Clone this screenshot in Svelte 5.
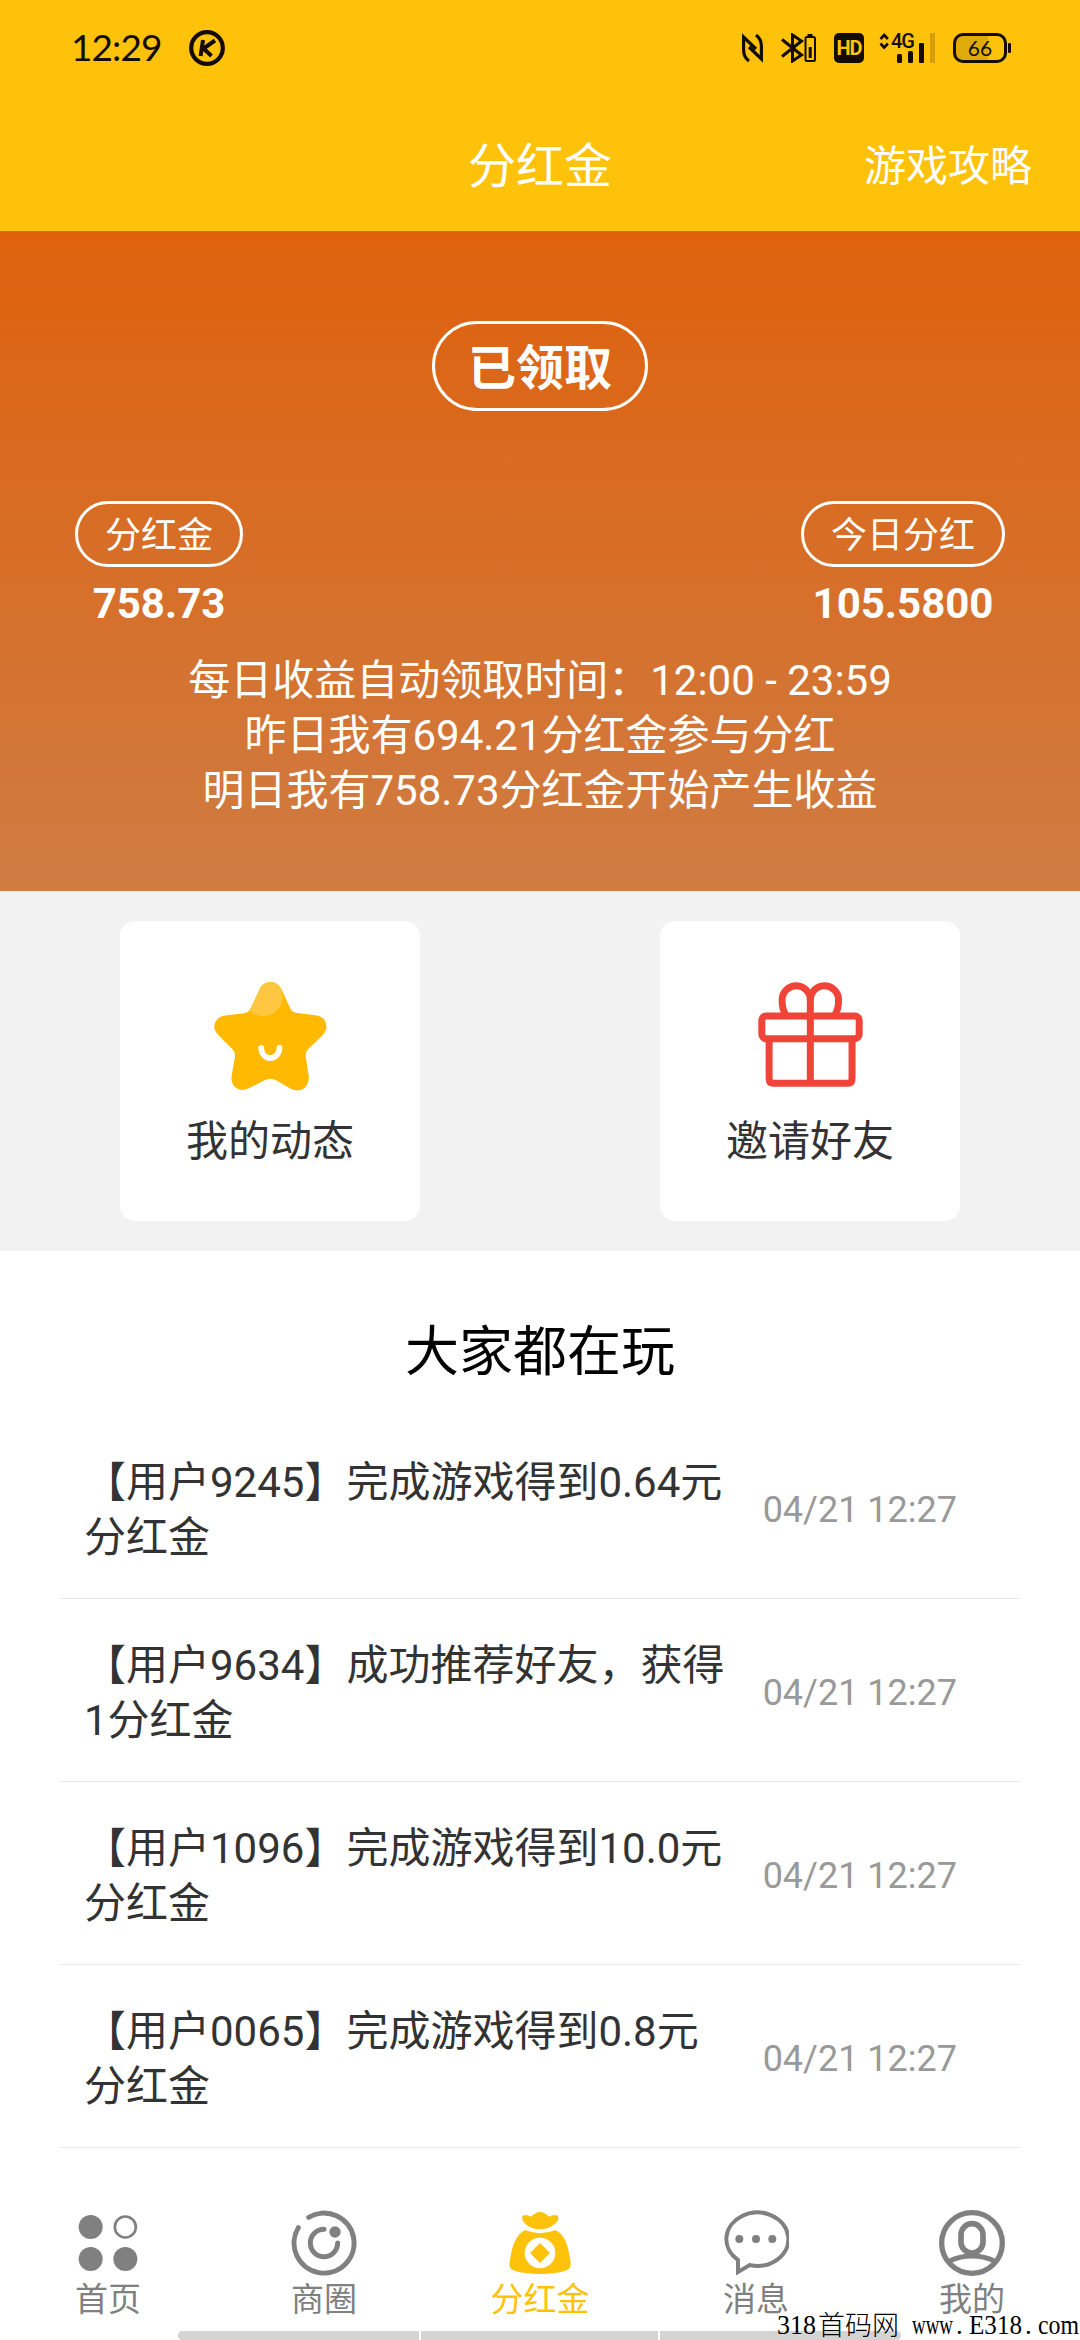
<script>
  const notices = [
    '每日收益自动领取时间：12:00 - 23:59',
    '昨日我有694.21分红金参与分红',
    '明日我有758.73分红金开始产生收益'
  ];

  const records = [
    { text: '【用户9245】完成游戏得到0.64元分红金', time: '04/21 12:27' },
    { text: '【用户9634】成功推荐好友，获得1分红金', time: '04/21 12:27' },
    { text: '【用户1096】完成游戏得到10.0元分红金', time: '04/21 12:27' },
    { text: '【用户0065】完成游戏得到0.8元分红金', time: '04/21 12:27' }
  ];

  const tabs = [
    { id: 'home', label: '首页' },
    { id: 'shop', label: '商圈' },
    { id: 'bonus', label: '分红金' },
    { id: 'message', label: '消息' },
    { id: 'mine', label: '我的' }
  ];

  let active = 'bonus';
</script>

<div class="page">
  <header>
    <div class="status">
      <span class="clock">12:29</span>
      <svg class="k-icon" width="36" height="36" viewBox="0 0 36 36" fill="none" stroke="#140c00">
        <circle cx="18" cy="18" r="15.8" stroke-width="4.2"/>
        <path d="M14 10l-2.4 16M26 10.5L14.5 18.5l8 7.5" stroke-width="4"/>
      </svg>

      <div class="status-right">
        <!-- nfc -->
        <svg width="21" height="30" viewBox="0 0 21 30" fill="none" stroke="#140c00" stroke-width="3.2">
          <path d="M7 28Q1.6 24 1.6 17V4L14 16M14 2Q19.4 6 19.4 13V26L7 14"/>
        </svg>
        <!-- bluetooth + device battery -->
        <svg class="bt" width="35" height="30" viewBox="0 0 35 30" fill="none" stroke="#140c00">
          <path d="M1 6.5L20.5 22L11.5 28V2L20.5 8L1 23.5" stroke-width="3"/>
          <rect x="24.5" y="4" width="9.5" height="24" rx="1.5" stroke-width="2"/>
          <path d="M26.5 2.5h5M29.2 14v11" stroke-width="3"/>
        </svg>
        <div class="hd">HD</div>
        <div class="signal">
          <svg width="56" height="30" viewBox="0 0 56 30">
            <path d="M1.5 6l3.7-4 3.7 4M1.5 10.5l3.7 4 3.7-4" fill="none" stroke="#140c00" stroke-width="2.6"/>
            <rect x="18" y="21" width="5" height="9" rx="1.5" fill="#140c00"/>
            <rect x="29" y="18" width="5" height="12" rx="1.5" fill="#140c00"/>
            <rect x="40" y="10" width="5" height="20" rx="1" fill="#140c00"/>
            <rect x="51" y="0" width="5" height="30" fill="#d39e08"/>
          </svg>
          <span>4G</span>
        </div>
        <div class="battery"><span>66</span></div>
      </div>
    </div>

    <div class="titlebar">
      <span></span>
      <h1>分红金</h1>
      <a href="#guide">游戏攻略</a>
    </div>
  </header>

  <section class="hero">
    <button class="claim">已领取</button>
    <div class="stats">
      <div class="stat">
        <span class="pill">分红金</span>
        <strong>758.73</strong>
      </div>
      <div class="stat">
        <span class="pill">今日分红</span>
        <strong>105.5800</strong>
      </div>
    </div>
    <div class="notices">
      {#each notices as line}
        <p>{line}</p>
      {/each}
    </div>
  </section>

  <section class="cards">
    <div class="card">
      <svg width="113" height="109" viewBox="0 0 340 328">
        <defs>
          <clipPath id="star">
            <path d="M138 20Q148 0 170 0Q192 0 203 22L229 78Q235 91 250 93L306 100Q330 103 337 124Q343 142 327 160L283 202Q274 211 276 224L285 282Q288 308 268 322Q252 331 232 322L187 296Q170 286 152 296L104 320Q84 331 66 318Q50 306 53 282L63 226Q65 211 54 201L12 158Q-4 142 3 124Q10 104 34 101L92 94Q104 92 110 80Z"/>
          </clipPath>
        </defs>
        <g clip-path="url(#star)">
          <rect width="340" height="328" fill="#ffb900"/>
          <circle cx="148" cy="45" r="58" fill="#ffc641"/>
        </g>
        <path d="M142 198a27.5 31 0 0 0 55 0" fill="none" stroke="#fff" stroke-width="17" stroke-linecap="round"/>
      </svg>
      <span>我的动态</span>
    </div>
    <div class="card">
      <svg width="105" height="109" viewBox="0 0 314 328" fill="none" stroke="#f04438" stroke-width="21">
        <rect x="10.5" y="102.5" width="293" height="68" rx="13"/>
        <path d="M32.500 171V292q0 13 13 13H269q13 0 13-13V171M156.500 50V305"/>
        <path d="M82 98Q71 80 71.500 53A42.500 42.500 0 0 1 156.500 55A42.500 42.500 0 0 1 241.500 53Q242 80 231 98"/>
      </svg>
      <span>邀请好友</span>
    </div>
  </section>

  <section class="feed">
    <h2>大家都在玩</h2>
    <ul>
      {#each records as item}
        <li>
          <p>{item.text}</p>
          <time>{item.time}</time>
        </li>
      {/each}
    </ul>
  </section>

  <nav>
    {#each tabs as tab}
      <button class="tab" class:active={active === tab.id} on:click={() => (active = tab.id)}>
        <svg width="66" height="66" viewBox="0 0 198 198" fill="none" stroke="currentColor">
          {#if tab.id === 'home'}
            <g fill="currentColor" stroke="none">
              <circle cx="47" cy="51" r="36"/>
              <circle cx="47" cy="147" r="36"/>
              <circle cx="151" cy="147" r="36"/>
            </g>
            <circle cx="151" cy="51" r="31.5" stroke-width="8"/>
          {:else if tab.id === 'shop'}
            <g stroke-width="15" stroke-linecap="round">
              <path d="M53 22A90 90 0 1 1 22 53"/>
              <path d="M99 58A41 41 0 1 0 140 99"/>
            </g>
            <circle cx="132" cy="66" r="17" fill="currentColor" stroke="none"/>
          {:else if tab.id === 'bonus'}
            <g transform="translate(7 6)" fill="currentColor" stroke="none">
              <path d="M40 11Q52 6 65 14Q92 -14 119 14Q132 6 145 11Q152 22 136 36Q118 52 92 52Q66 52 48 36Q34 22 40 11Z"/>
              <path fill-rule="evenodd" d="M48 54Q92 74 138 54Q172 70 180 130Q187 158 182 166Q174 184 92 186Q10 184 2 166Q-2 158 4 132Q14 70 48 54ZM92 77a46 46 0 1 0 0 92a46 46 0 1 0 0-92Z"/>
              <path d="M92 93l30 30l-30 30l-30-30z"/>
            </g>
          {:else if tab.id === 'message'}
            <path d="M45 150A93 80 0 1 1 80 165L45 186Z" stroke-width="12"/>
            <g fill="currentColor" stroke="none">
              <circle cx="49" cy="87" r="12"/>
              <circle cx="99" cy="87" r="12"/>
              <circle cx="148" cy="87" r="12"/>
            </g>
          {:else}
            <circle cx="99" cy="99" r="91" stroke-width="16"/>
            <rect x="66" y="41" width="66" height="88" rx="33" stroke-width="17"/>
            <path d="M27 155Q62 138 99 138T171 155" stroke-width="15"/>
          {/if}
        </svg>
        <span>{tab.label}</span>
      </button>
    {/each}

    <!-- system gesture bar -->
    <div class="gesture"><i></i><i></i><i></i></div>
    <svg class="watermark" width="304" height="34" viewBox="0 0 304 34">
      <text x="1" y="28" textLength="39" lengthAdjust="spacingAndGlyphs">318</text>
      <text class="cn" x="42" y="29">首码网</text>
      <text x="136" y="28" textLength="41" lengthAdjust="spacingAndGlyphs">www</text>
      <text x="180" y="28">.</text>
      <text x="193" y="28" textLength="53" lengthAdjust="spacingAndGlyphs">E318</text>
      <text x="249" y="28">.</text>
      <text x="262" y="28" textLength="41" lengthAdjust="spacingAndGlyphs">com</text>
    </svg>
  </nav>
</div>

<style>
  :global(body) {
    background: #fff;
  }

  .page {
    width: 1080px;
    height: 2340px;
    display: flex;
    flex-direction: column;
    overflow: hidden;
    font-family: Roboto, "Noto Sans CJK SC", sans-serif;
    font-size: 42px;
    line-height: 55px;
    color: #333;
  }

  h1, h2, p, ul {
    margin: 0;
    padding: 0;
    font-weight: 400;
  }

  button {
    font-family: inherit;
    background: none;
    border: none;
    padding: 0;
  }

  header {
    height: 231px;
    background: #ffc20a;
    flex: none;
  }

  .status {
    height: 96px;
    padding: 0 69px 0 71px;
    display: flex;
    align-items: center;
    color: #140c00;
  }

  .clock {
    width: 118px;
    padding-bottom: 3px;
    font-family: Lato, sans-serif;
    font-size: 37px;
    letter-spacing: -0.9px;
  }

  .status-right {
    margin-left: auto;
    display: flex;
    align-items: center;
    gap: 18px;
  }

  .hd {
    width: 30px;
    height: 30px;
    border-radius: 5px;
    background: #140c00;
    color: #ffc20a;
    font-size: 20px;
    font-weight: 700;
    line-height: 31px;
    letter-spacing: -1px;
    text-align: center;
  }

  .signal {
    position: relative;
    display: flex;
    margin-left: -3px;
  }

  .signal span {
    position: absolute;
    left: 12px;
    top: -2px;
    font-size: 20px;
    font-weight: 500;
    line-height: 20px;
    letter-spacing: -1px;
  }

  .battery {
    position: relative;
    box-sizing: border-box;
    width: 54px;
    height: 30px;
    margin-right: 4px;
    border: 3px solid #140c00;
    border-radius: 10px;
    background: linear-gradient(90deg, #dfab0b 66%, #ffc20a 66%);
    font-family: Lato, sans-serif;
    font-size: 21px;
    line-height: 23px;
    text-align: center;
  }

  .battery::after {
    content: '';
    position: absolute;
    right: -7px;
    top: 7px;
    width: 3px;
    height: 10px;
    border-radius: 1px;
    background: #140c00;
  }

  .titlebar {
    height: 135px;
    box-sizing: border-box;
    display: grid;
    grid-template-columns: 1fr auto 1fr;
    align-items: center;
    padding: 6px 48px 0;
    color: #fff;
  }

  h1 {
    font-size: 48px;
  }

  .titlebar a {
    justify-self: end;
    color: inherit;
    text-decoration: none;
  }

  .hero {
    box-sizing: border-box;
    height: 660px;
    flex: none;
    padding-top: 90px;
    display: flex;
    flex-direction: column;
    align-items: center;
    background: linear-gradient(#df610d, #cf7c43);
    color: #fff;
  }

  .claim {
    box-sizing: border-box;
    width: 216px;
    height: 90px;
    padding-bottom: 4px;
    border: 3px solid #fff;
    border-radius: 45px;
    color: #fff;
    font-size: 48px;
    font-weight: 700;
  }

  .stats {
    align-self: stretch;
    display: flex;
    justify-content: space-between;
    padding: 0 75px;
    margin-top: 90px;
  }

  .stat {
    display: flex;
    flex-direction: column;
    align-items: center;
  }

  .pill {
    border: 3px solid #fff;
    border-radius: 33px;
    padding: 4px 27px 0;
    font-size: 36px;
    line-height: 56px;
  }

  .stat strong {
    margin-top: 9px;
    font-weight: 700;
  }

  .notices {
    margin-top: 22px;
    text-align: center;
  }

  .cards {
    height: 360px;
    flex: none;
    display: flex;
    justify-content: space-around;
    align-items: center;
    background: #f2f2f2;
  }

  .card {
    width: 300px;
    height: 300px;
    border-radius: 15px;
    background: #fff;
    display: flex;
    flex-direction: column;
    align-items: center;
  }

  .card svg {
    margin-top: 61px;
    margin-bottom: 23px;
  }

  .feed {
    flex: 1;
    padding: 0 60px;
  }

  h2 {
    padding-top: 66px;
    height: 99px;
    line-height: 72px;
    font-size: 54px;
    text-align: center;
    color: #000;
  }

  ul {
    list-style: none;
  }

  li {
    display: flex;
    justify-content: space-between;
    align-items: center;
    padding: 39px 63px 33px 24px;
    border-bottom: 1px solid #e8e8e8;
  }

  li p {
    width: 645px;
  }

  time {
    font-size: 36px;
    color: #999;
  }

  nav {
    position: relative;
    height: 150px;
    flex: none;
    display: flex;
    background: #fff;
  }

  .tab {
    flex: 1;
    padding-top: 20px;
    display: flex;
    flex-direction: column;
    align-items: center;
    font-size: 33px;
    line-height: 44px;
    color: #808080;
  }

  .tab span {
    padding-top: 2px;
  }

  .tab.active {
    color: #ffc20a;
  }

  .gesture {
    position: absolute;
    left: 178px;
    right: 179px;
    bottom: 0;
    height: 9px;
    display: grid;
    grid-template-columns: 241px 237px 1fr;
    gap: 2px;
    border-radius: 5px;
    overflow: hidden;
  }

  .gesture i {
    background: #d4d4d4;
  }

  .watermark {
    position: absolute;
    right: 0;
    bottom: 0;
    font-family: "Liberation Serif", serif;
    font-size: 27px;
    fill: #000;
  }

  .cn {
    font-family: "Noto Sans CJK SC", sans-serif;
    font-weight: 300;
    font-size: 27px;
  }
</style>
